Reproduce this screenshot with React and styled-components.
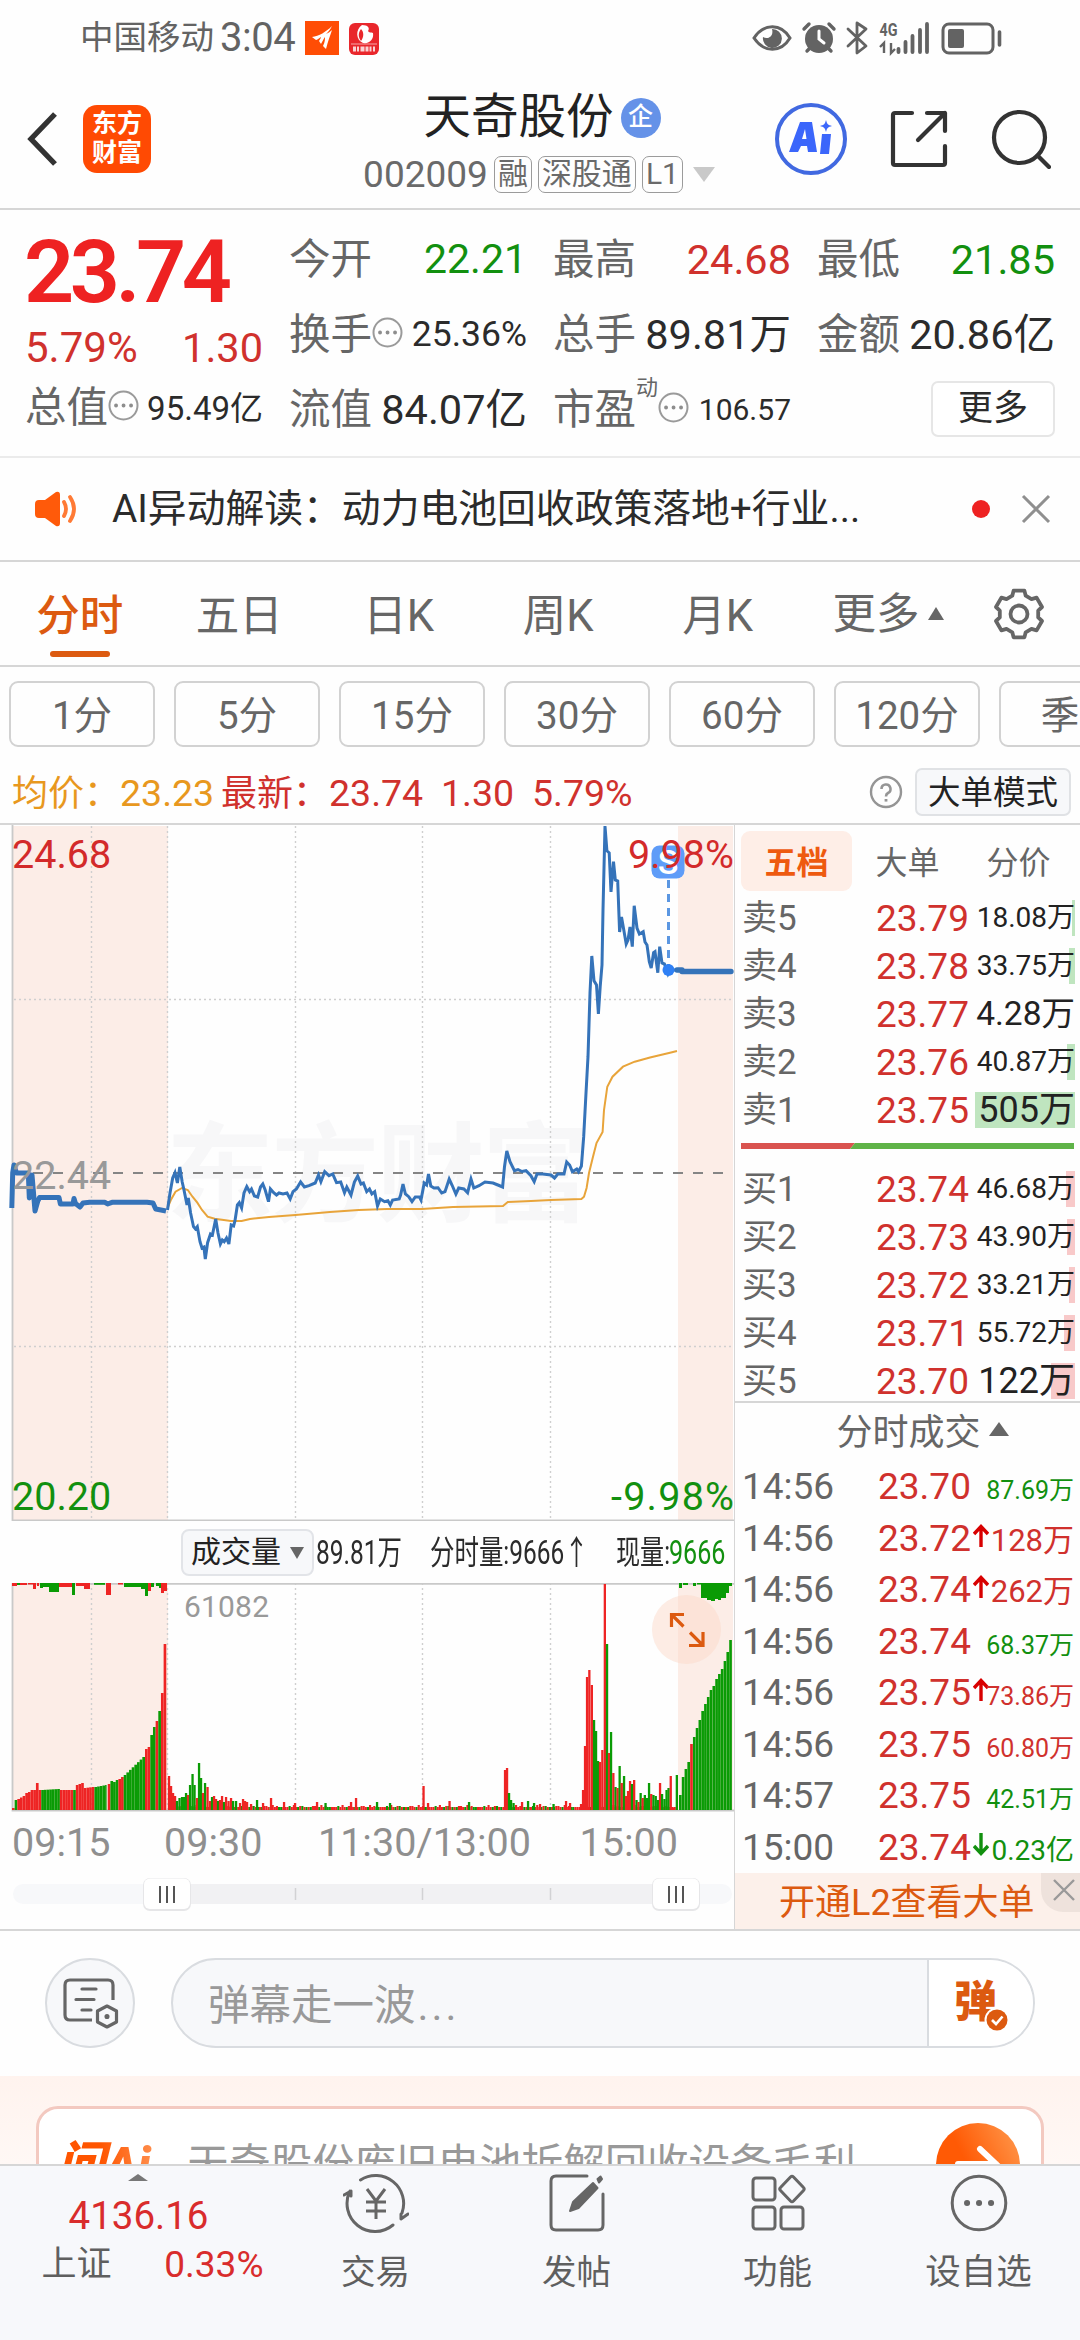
import React from 'react'
import styled, { createGlobalStyle } from 'styled-components'

const RED = '#d0312d'
const GREEN = '#12900f'
const ORANGE = '#dc5a10'
const GREY = '#666666'
const DARK = '#2b2b2b'
const LINE = '#d6d6d6'

const GlobalStyle = createGlobalStyle`
  * {
    box-sizing: border-box;
  }

  body {
    margin: 0;
    background: #fff;
  }

  svg {
    display: block;
    flex: none;
  }
`

const Screen = styled.div`
  width: 1080px;
  height: 2340px;
  overflow: hidden;
  background: #fefefe;
  color: ${DARK};
  font-family: Roboto, 'Noto Sans CJK SC', sans-serif;
  line-height: 1;
  white-space: nowrap;
  display: flex;
  flex-direction: column;
`

const Txt = styled.span`
  font-size: ${p => p.$size}px;
  line-height: ${p => p.$size}px;
  color: ${p => p.$color || 'inherit'};
  font-weight: ${p => p.$weight || 400};
  letter-spacing: ${p => p.$ls || 0}px;
`

/* ---------- status bar ---------- */

const StatusBar = styled.div`
  height: 70px;
  padding: 5px 78px 0 80px;
  display: flex;
  align-items: center;
  justify-content: space-between;
  color: #636363;
`

const StatusGroup = styled.div`
  display: flex;
  align-items: center;
`

const StatusTime = styled(Txt)`
  margin: 0 9px 0 6px;
`

function StatusLeft() {
  return (
    <StatusGroup>
      <Txt $size={33.5}>中国移动</Txt>
      <StatusTime $size={40} $ls={-0.5}>
        3:04
      </StatusTime>
      <svg width="76" height="36" viewBox="304 18 76 36">
        <rect x="305" y="19" width="34" height="34" fill="#ff4d05" />
        <path
          d="M312 35c7-1 14-5 20-11-2 4-4 6-6 8 2-1 4-2 6-4-2 6-4 11-6 19l-3-3c2-4 2-7 2-9-2 3-3 5-4 7l-2-3c1-2 2-3 2-4-2 1-4 3-5 3z"
          fill="#fff"
        />
        <rect x="349" y="21" width="30" height="32" rx="6" fill="#e9272c" />
        <path
          d="M362 23c-7 5-6 15 1 18 7 1 11-4 10-10-2-1-4 0-5-2 2-3 0-6-6-6zM361 27c3 3 3 8 0 12-3-4-3-8 0-12z"
          fill="#fff"
          fillRule="evenodd"
        />
        <path d="M351 42h26" stroke="#fff" strokeWidth="1" opacity=".6" />
        <path d="M353 47h22" stroke="#fff" strokeWidth="5" strokeDasharray="3 1 2 1.5 4 1" opacity=".8" />
      </svg>
    </StatusGroup>
  )
}

function StatusRight() {
  return (
    <svg width="250" height="36" viewBox="752 18 250 36" fill="none" stroke="#636363">
      <path d="M754 36c10-15 27-15 36 0-9 15-26 15-36 0z" strokeWidth="3" />
      <path d="M772 27a9.500 9.500 0 1 1-9 8c5 3 11-1 9-8z" fill="#636363" stroke="none" />
      <circle cx="819" cy="37" r="14" fill="#636363" stroke="none" />
      <path d="M804 27l5-5M834 27l-5-5M807 49l3-3M831 49l-3-3" strokeWidth="3.4" strokeLinecap="round" />
      <path d="M819 29v8l5 4" stroke="#fff" strokeWidth="3" strokeLinecap="round" />
      <path d="M848 27l18 17-9 7V21l9 6-18 17" strokeWidth="2.8" strokeLinejoin="round" strokeLinecap="round" />
      <text
        x="879.5"
        y="34"
        fill="#636363"
        stroke="none"
        fontSize="18"
        fontWeight="700"
        fontFamily="Roboto"
        textLength="18"
        lengthAdjust="spacingAndGlyphs"
      >
        4G
      </text>
      <path d="M884 51V41l-4 4M891 41v10l4-4" strokeWidth="2.4" />
      <path d="M898.5 47v3M905.5 40v10M912.5 34v16M920 28v22M927 22v28" strokeWidth="3.8" strokeLinecap="round" />
      <rect x="943" y="22" width="50" height="29" rx="6" strokeWidth="3" />
      <rect x="948" y="27" width="16" height="19" rx="2" fill="#636363" stroke="none" />
      <path d="M999.5 30v13" strokeWidth="3.6" strokeLinecap="round" />
    </svg>
  )
}

/* ---------- title bar ---------- */

const Header = styled.header`
  height: 140px;
  padding: 0 29px 0 27px;
  border-bottom: 2px solid ${LINE};
  display: grid;
  grid-template-columns: 1fr auto 1fr;
`

const HeaderSide = styled.div`
  display: flex;
  align-items: center;
  gap: ${p => p.$gap}px;
  justify-content: ${p => p.$align || 'flex-start'};
`

const Logo = styled.div`
  width: 68px;
  height: 68px;
  border-radius: 14px;
  background: #ff4a03;
  color: #fff;
  font-size: 25px;
  font-weight: 700;
  line-height: 29px;
  padding-top: 4px;
  text-align: center;
`

const HeaderCenter = styled.div`
  display: flex;
  flex-direction: column;
  align-items: center;
  padding-top: 23px;
`

const TitleRow = styled.div`
  display: flex;
  align-items: center;
  gap: 7px;
  height: 50px;
  padding-left: 6px;
`

const Badge = styled.span`
  width: 40px;
  height: 40px;
  border-radius: 50%;
  background: #6592e8;
  color: #fff;
  font-size: 25px;
  font-weight: 500;
  line-height: 38px;
  text-align: center;
`

const CodeRow = styled.div`
  display: flex;
  align-items: center;
  gap: 6px;
  height: 38px;
  margin-top: 12px;
  color: #6a6a6a;
`

const Tag = styled.span`
  height: 37px;
  padding: 0 3px;
  border: 1.5px solid #9b9b9b;
  border-radius: 7px;
  font-size: 30px;
  line-height: 34px;
`

const Caret = styled.span`
  width: 0;
  height: 0;
  border-left: ${p => p.$w / 2}px solid transparent;
  border-right: ${p => p.$w / 2}px solid transparent;
  border-top: ${p => (p.$up ? 0 : p.$h)}px solid ${p => p.$color};
  border-bottom: ${p => (p.$up ? p.$h : 0)}px solid ${p => p.$color};
  margin-left: ${p => p.$ml || 0}px;
  margin-top: ${p => p.$mt || 0}px;
`

function TitleBar() {
  return (
    <Header>
      <HeaderSide $gap={25}>
        <svg width="31" height="54" viewBox="0 0 31 54">
          <path d="M28 2L4 27l24 25" fill="none" stroke="#333" strokeWidth="5.4" />
        </svg>
        <Logo>
          东方
          <br />
          财富
        </Logo>
      </HeaderSide>
      <HeaderCenter>
        <TitleRow>
          <Txt $size={47.5} $color="#222">
            天奇股份
          </Txt>
          <Badge>企</Badge>
        </TitleRow>
        <CodeRow>
          <Txt $size={37}>002009</Txt>
          <Tag>融</Tag>
          <Tag>深股通</Tag>
          <Tag>L1</Tag>
          <Caret $w={22} $h={15} $color="#c9c9c9" $ml={4} />
        </CodeRow>
      </HeaderCenter>
      <HeaderSide $gap={43} $align="flex-end">
        <svg width="72" height="72" viewBox="0 0 72 72">
          <circle cx="36" cy="36" r="34" fill="none" stroke="#4169e1" strokeWidth="4" />
          <path
            d="M25 19h12l5 30h-9l-1-6h-6l-3 6h-9zM30 26l-3 10h4.500zM47 31h9l-2 20h-9zM51 17c1 4 2 5 6 6-4 1-5 2-6 6-1-4-2-5-6-6 4-1 5-2 6-6z"
            fill="#3b66fb"
            fillRule="evenodd"
          />
        </svg>
        <svg width="58" height="58" viewBox="0 0 58 58" fill="none" stroke="#333" strokeWidth="4.200" strokeLinecap="round" strokeLinejoin="round">
          <path d="M22 3H5q-2 0-2 2v48q0 2 2 2h48q2 0 2-2V36" />
          <path d="M37 3h18v18M55 3L28 30" />
        </svg>
        <svg width="60" height="60" viewBox="0 0 60 60" fill="none" stroke="#333" strokeWidth="4.200" strokeLinecap="round">
          <circle cx="28.500" cy="28.500" r="25.500" />
          <path d="M46.500 46.500L58 58" />
        </svg>
      </HeaderSide>
    </Header>
  )
}

/* ---------- quote summary ---------- */

const Quote = styled.section`
  height: 248px;
  padding: 0 26px 0 25px;
  border-bottom: 2px solid #ebebeb;
  display: grid;
  grid-template-columns: 238px 1fr;
  column-gap: 26px;
`

const QuoteMain = styled.div`
  display: flex;
  flex-direction: column;
`

const LastPrice = styled(Txt)`
  margin: 18px 0 0 -1px;
`

const Spread = styled.div`
  display: flex;
  align-items: center;
  justify-content: space-between;
  height: ${p => p.$h}px;
  margin-top: ${p => p.$mt || 0}px;
`

const QuoteGrid = styled.div`
  display: grid;
  grid-template-columns: repeat(3, 238px);
  column-gap: 26px;
  grid-template-rows: repeat(3, 75px);
  padding-top: 12px;
`

const Cell = styled.div`
  display: flex;
  align-items: center;
  justify-content: space-between;
`

const LabelBox = styled.span`
  display: flex;
  align-items: center;
  color: ${GREY};
  font-size: 41.500px;
  line-height: 42px;
`

const Sup = styled.sup`
  align-self: flex-start;
  font-size: 22px;
  line-height: 22px;
  margin: -12px 0 0 0;
`

const DotsIcon = styled.svg`
  margin-bottom: 5px;
`

const MoreButton = styled.button`
  width: 124px;
  height: 56px;
  margin: -2px 0 0 auto;
  padding: 0;
  border: 2px solid #e6e6e6;
  border-radius: 7px;
  background: #fff;
  color: ${DARK};
  font: 35px/48px Roboto, 'Noto Sans CJK SC', sans-serif;
`

const Dots = () => (
  <DotsIcon width="31" height="31" viewBox="0 0 31 31">
    <circle cx="15.500" cy="15.500" r="14" fill="none" stroke="#9a9a9a" strokeWidth="2" />
    <path d="M8 15.500h.1M15.500 15.500h.1M23 15.500h.1" stroke="#8d8d8d" strokeWidth="3.800" strokeLinecap="round" />
  </DotsIcon>
)

const quoteCells = [
  { label: '今开', value: '22.21', color: GREEN, size: 41 },
  { label: '最高', value: '24.68', color: RED, size: 41.5 },
  { label: '最低', value: '21.85', color: GREEN, size: 41.5 },
  { label: '换手', value: '25.36%', size: 35.5, dots: true },
  { label: '总手', value: '89.81万', size: 41.5 },
  { label: '金额', value: '20.86亿', size: 41.5 },
  { label: '流值', value: '84.07亿', size: 41.5 },
  { label: '市盈', value: '106.57', size: 30, dots: true, sup: '动' }
]

function QuotePanel() {
  return (
    <Quote>
      <QuoteMain>
        <LastPrice $size={88} $weight={600} $color="#ee2222" $ls={-4.5}>
          23.74
        </LastPrice>
        <Spread $h={50} $mt={7}>
          <Txt $size={42} $color={RED}>
            5.79%
          </Txt>
          <Txt $size={41.5} $color={RED}>
            1.30
          </Txt>
        </Spread>
        <Spread $h={50} $mt={10}>
          <LabelBox>
            总值
            <Dots />
          </LabelBox>
          <Txt $size={33}>95.49亿</Txt>
        </Spread>
      </QuoteMain>
      <QuoteGrid>
        {quoteCells.map(c => (
          <Cell key={c.label}>
            <LabelBox>
              {c.label}
              {c.sup && <Sup>{c.sup}</Sup>}
              {c.dots && <Dots />}
            </LabelBox>
            <Txt $size={c.size} $color={c.color}>
              {c.value}
            </Txt>
          </Cell>
        ))}
        <Cell>
          <MoreButton>更多</MoreButton>
        </Cell>
      </QuoteGrid>
    </Quote>
  )
}

/* ---------- notice ---------- */

const Notice = styled.div`
  height: 104px;
  border-bottom: 2px solid ${LINE};
  padding: 0 29px 0 33px;
  display: flex;
  align-items: center;
`

const NoticeText = styled(Txt)`
  flex: 1;
  margin-left: 33px;
`

const RedDot = styled.span`
  width: 18px;
  height: 18px;
  border-radius: 50%;
  background: #ee2222;
  margin-right: 31px;
`

function NoticeBar() {
  return (
    <Notice>
      <svg width="46" height="38" viewBox="0 0 46 38">
        <path d="M2 14q0-4 4-4h6L23 2q4-1 4 3v28q0 4-4 3L12 28H6q-4 0-4-4z" fill="#ff5a0a" />
        <path d="M31 12q4 7 0 14M37 7q8 12 0 24" fill="none" stroke="#ff7a35" strokeWidth="3.800" strokeLinecap="round" />
      </svg>
      <NoticeText $size={38.8}>AI异动解读：动力电池回收政策落地+行业...</NoticeText>
      <RedDot />
      <svg width="30" height="30" viewBox="0 0 30 30">
        <path d="M2 2l26 26M28 2L2 28" stroke="#8f8f8f" strokeWidth="3" />
      </svg>
    </Notice>
  )
}

/* ---------- period tabs ---------- */

const Tabs = styled.nav`
  height: 105px;
  border-bottom: 2px solid ${LINE};
  display: flex;
  align-items: center;
  padding: 0 35px 0 0;
`

const Tab = styled.div`
  width: 159.500px;
  height: 103px;
  padding-top: 32px;
  display: flex;
  flex-direction: column;
  align-items: center;
  color: ${p => (p.$active ? ORANGE : GREY)};
  font-size: 43.500px;
  line-height: 46px;
  font-weight: ${p => (p.$active ? 500 : 400)};

  &::after {
    content: '';
    width: 60px;
    height: 6px;
    margin-top: 11px;
    border-radius: 3px;
    background: ${p => (p.$active ? ORANGE : 'transparent')};
  }
`

const MoreTab = styled.div`
  display: flex;
  align-items: center;
  flex: 1;
  padding: 3px 0 0 35px;
  color: ${GREY};
  font-size: 43.500px;
  line-height: 46px;
`

const Chips = styled.div`
  height: 99px;
  padding: 0 9px 5px;
  display: flex;
  align-items: center;
  gap: 19px;
  overflow: hidden;
`

const Chip = styled.div`
  flex: 0 0 146px;
  height: 66px;
  border: 2px solid #d2d2d2;
  border-radius: 9px;
  text-align: center;
  color: ${GREY};
  font-size: 38.500px;
  line-height: 66px;
`

// six-tooth cog outline
const cogPath = (() => {
  const pts = []
  for (let i = 0; i < 6; i++) {
    const a = i * 60 - 90
    ;[
      [-20, 19.5],
      [-13, 24],
      [13, 24],
      [20, 19.5]
    ].forEach(([d, r]) => {
      const t = ((a + d) * Math.PI) / 180
      pts.push(`${(26 + r * Math.cos(t)).toFixed(1)} ${(26 + r * Math.sin(t)).toFixed(1)}`)
    })
  }
  return `M${pts.join('L')}Z`
})()

function PeriodTabs() {
  return (
    <>
      <Tabs>
        {['分时', '五日', '日K', '周K', '月K'].map((t, i) => (
          <Tab key={t} $active={i === 0}>
            {t}
          </Tab>
        ))}
        <MoreTab>
          更多
          <Caret $w={16} $h={13} $color={GREY} $up $ml={8} $mt={-3} />
        </MoreTab>
        <svg width="52" height="52" viewBox="0 0 52 52" fill="none" stroke={GREY} strokeWidth="3.800" strokeLinejoin="round">
          <path d={cogPath} />
          <circle cx="26" cy="26" r="8.500" />
        </svg>
      </Tabs>
      <Chips>
        {['1分', '5分', '15分', '30分', '60分', '120分', '季K'].map(t => (
          <Chip key={t}>{t}</Chip>
        ))}
      </Chips>
    </>
  )
}

/* ---------- average line ---------- */

const AvgRow = styled.div`
  height: 59px;
  border-bottom: 2px solid ${LINE};
  padding: 0 9px 5px 12px;
  display: flex;
  align-items: center;
  color: ${RED};
`

const AvgText = styled(Txt)`
  width: ${p => p.$w}px;
  padding-top: 4px;
`

const ModeButton = styled.div`
  width: 156px;
  height: 48px;
  margin-left: 12px;
  border: 2px solid #e0e2e5;
  border-radius: 7px;
  background: #f7f8fa;
  color: #222;
  font-size: 32.500px;
  line-height: 47px;
  text-align: center;
`

const Spacer = styled.span`
  flex: 1;
`

function AverageRow() {
  return (
    <AvgRow>
      <AvgText $w={108} $size={36} $color="#e8981e">
        均价：
      </AvgText>
      <AvgText $w={101} $size={37.5} $color="#e8981e">
        23.23
      </AvgText>
      <AvgText $w={108} $size={36}>
        最新：
      </AvgText>
      <AvgText $w={112} $size={37.5}>
        23.74
      </AvgText>
      <AvgText $w={91} $size={37.5}>
        1.30
      </AvgText>
      <AvgText $w={100} $size={37.5}>
        5.79%
      </AvgText>
      <Spacer />
      <svg width="34" height="34" viewBox="0 0 34 34" fill="none" stroke="#959595">
        <circle cx="17" cy="17" r="15" strokeWidth="2.400" />
        <path d="M12.500 14a4.500 4.500 0 1 1 6.500 4q-2 1-2 3.500" strokeWidth="2.600" />
        <path d="M17 24v2.600" strokeWidth="2.800" />
      </svg>
      <ModeButton>大单模式</ModeButton>
    </AvgRow>
  )
}

/* ---------- intraday chart ---------- */

const preOpen =
  '11.8,1208 12.7,1173 14,1165 16.5,1173 28.3,1173 29.3,1198 32,1175 35,1211 37.8,1201 39.6,1197.5 59,1197.5 60.4,1204 73,1204 74,1198.5 75.5,1203.5 80,1207 83,1203 89.7,1202.3 105,1202.3 107.6,1204 112,1202.3 147,1202.3 153,1203 155.7,1209 161,1210 166,1211'

const price =
  '167.5,1210 170,1193 172.7,1178 175,1172.7 177.4,1183 179.8,1167 182.2,1182 184,1190 187,1205 188.3,1198 190.6,1213 193.5,1226.7 195.4,1229 197.3,1226.7 200,1241.7 202,1248 203.9,1247 205.3,1259 207.6,1242.7 210.5,1234 212.4,1235 215.7,1219 218,1233 220.4,1244 222.3,1240 224.2,1241.7 226.5,1238 228.9,1244 231.2,1225 233.6,1226 235,1220.7 237.4,1205 239.3,1202.7 241.6,1208 244,1193 246.8,1186.7 249.6,1191.7 251.5,1189 254.4,1196 257.7,1197 260.5,1187 262.8,1184 265.2,1190 268.5,1201.7 270.4,1189 273.7,1192.7 276.5,1195 279,1193 283,1194 287,1193 290.2,1199 293,1191.7 296.4,1189 300.6,1182 304.4,1187 309,1185.7 315.2,1183 318.5,1175 320.9,1181.7 324.7,1171.7 329,1175.7 332.7,1174 336.5,1182.7 340.7,1182 344.5,1192.7 346.8,1187 351,1195 354.4,1182 357.7,1176 361,1184 363.4,1183 366.7,1191.7 369.5,1189 371.9,1194 374.7,1191.7 377.5,1206 380.3,1199 384.6,1201.7 387.9,1200.7 390.3,1205 392.6,1200 399.2,1199 400.6,1195 403,1184 405.4,1194 408.7,1196.7 412,1201.7 415.3,1197 419.5,1197 421,1200 424.2,1183 426.6,1185 428.5,1174 430.8,1186 434,1188 438,1187.7 441.7,1193 445,1191.7 449.2,1179 452,1185 455.9,1194 458.7,1188 463.9,1189 467.6,1192.7 471,1179 473.8,1188 479,1185.7 485,1182 493,1183 497.9,1185 502.6,1187 504.5,1166.7 506.8,1151 510,1161.7 514.4,1170.7 518,1169.5 522,1171.500 526,1170.7 530.9,1175.7 534.2,1181.7 537,1174 542.7,1174 551,1175 554.5,1178 557.8,1174 564,1174 566.7,1162 569.6,1165 572.4,1171.7 576.7,1169 578.5,1171.7 581.4,1166 583.7,1136.7 586,1093 588,1056.7 590,993 591.8,956 594,980.7 596.5,985 598.4,1014 600.2,986.7 602,965 603,910 605,826 606.9,850.7 609.2,853 611,892 613.5,861.7 615.3,880 617.7,881 619.6,932 621.5,917 623.8,930 626.2,944 628,940 630,927 632.3,946.7 634.2,905.7 637,928 639.4,934 643.2,931.7 645,942 647,945 649.3,961.7 651.2,968 653.6,952.7 655,951.7 657.8,972.7 659.7,946.7 662,963 664.4,964 668,974 670,970 679.5,970'

const average =
  '167.5,1208 170.8,1200 175.5,1191.7 182,1188 187.8,1190 192.5,1196.7 197.3,1202.7 202,1210 207.6,1216.7 214.7,1218.7 231,1221 241.6,1221 250,1219 269,1217 295.4,1215 330,1212 358.6,1210 387,1209 422,1209 453,1207 503,1206 507.8,1202 531,1201 551,1200 581.4,1199 584,1196.7 586.6,1188 589,1173 593,1156.7 596.5,1143 602.6,1132 604,1110 607.3,1086.7 612.5,1076.7 623,1066.7 634.7,1061.7 650,1057.5 670,1052.7 677,1051'

const gridX = [91.5, 167.5, 295.5, 422.5, 550.5]

const ChartColumn = styled.div`
  width: 734px;
  display: flex;
  flex-direction: column;
`

const Plot = styled.svg`
  font-family: Roboto, 'Noto Sans CJK SC', sans-serif;
`

function PriceChart() {
  return (
    <Plot width="734" height="696" viewBox="0 825 734 696">
      <rect x="13" y="826" width="155" height="694" fill="#fcede7" />
      <rect x="678" y="826" width="55" height="694" fill="#fcede7" />
      <text x="166" y="1213" fontSize="108" fontWeight="700" fill="#f7f7f8" textLength="424">
        东方财富
      </text>
      <g stroke="#cfcfcf" strokeWidth="1.400" strokeDasharray="2 3">
        {gridX.map(x => (
          <path key={x} d={`M${x} 826V1520`} />
        ))}
        <path d="M14 999.500H733M14 1346.500H733" />
      </g>
      <path d="M12.500 825V1520.500H734" fill="none" stroke="#c9c9c9" strokeWidth="1.800" />
      <path d="M33 1173H733" stroke="#858585" strokeWidth="2" strokeDasharray="10 10" />
      <polyline points={average} fill="none" stroke="#e8a43a" strokeWidth="2" />
      <polyline points={preOpen} fill="none" stroke="#3573b9" strokeWidth="5" strokeLinejoin="round" />
      <polyline points={price} fill="none" stroke="#3573b9" strokeWidth="3" />
      <path d="M677 970H682M682 971.500H731" stroke="#3573b9" strokeWidth="5.400" strokeLinecap="round" />
      <rect x="651.500" y="845.500" width="33" height="33" rx="8" fill="#5e9cf8" />
      <text x="668" y="874" fontSize="34" fontWeight="500" fill="#fff" textAnchor="middle">
        S
      </text>
      <path d="M668.500 880V966" stroke="#5b97e2" strokeWidth="3" strokeDasharray="8 6" />
      <circle cx="668.500" cy="970" r="6" fill="#2f80f5" />
      <text x="12" y="868" fontSize="39.500" fill="#d32a2a">
        24.68
      </text>
      <text x="734" y="868" fontSize="39.500" fill="#d32a2a" textAnchor="end" textLength="106">
        9.98%
      </text>
      <text x="12" y="1189" fontSize="39.500" fill="#999">
        22.44
      </text>
      <text x="12" y="1510" fontSize="39.500" fill={GREEN}>
        20.20
      </text>
      <text x="734" y="1510" fontSize="39.500" fill={GREEN} textAnchor="end" textLength="123">
        -9.98%
      </text>
    </Plot>
  )
}

const VolumeHead = styled.div`
  height: 62px;
  padding-left: 181px;
  display: flex;
  align-items: center;
`

const Picker = styled.div`
  width: 133px;
  height: 47px;
  border: 2px solid #e2e4e8;
  border-radius: 8px;
  background: #f7f8fa;
  display: flex;
  align-items: center;
  padding: 0 0 1px 8px;
  color: #222;
  font-size: 30px;
`

const Condensed = styled.span`
  width: ${p => p.$w}px;
  margin-left: ${p => p.$ml}px;
  font-size: 33.500px;
  line-height: 38px;
  padding-top: 2px;
  color: ${p => p.$color || DARK};

  & > span {
    display: inline-block;
    transform: scaleX(${p => p.$scale});
    transform-origin: left center;
  }
`

// runs of bars: [count, first height, last height, colour]
const preRuns = [
  [1, 2, 2, 'r'], [1, 10, 10, 'g'], [3, 11, 14, 'r'], [2, 17, 18, 'r'], [2, 20, 20, 'r'],
  [1, 27, 27, 'r'], [1, 20, 20, 'r'], [7, 20, 21, 'g'], [5, 20, 20, 'r'], [1, 20, 20, 'g'],
  [3, 25, 27, 'r'], [4, 22, 23, 'r'], [5, 23, 25, 'g'], [1, 26, 26, 'r'], [1, 29, 29, 'g'],
  [1, 28, 28, 'g'], [1, 30, 30, 'g'], [2, 31, 33, 'r'], [8, 35, 53, 'g'], [2, 61, 63, 'r'],
  [1, 75, 75, 'g'], [1, 83, 83, 'g'], [1, 89, 89, 'r'], [1, 99, 99, 'g'], [1, 117, 117, 'r'],
  [1, 166, 166, 'r']
]

const spikes = [
  [169, 34, 'r'], [171, 24, 'r'], [173, 17, 'r'], [175, 14, 'r'], [177, 9, 'g'], [179.500, 12, 'g'],
  [182, 13, 'g'], [184, 13, 'g'], [186, 17, 'g'], [188, 15, 'r'], [190, 25, 'g'], [192.5, 36, 'g'],
  [194.500, 25, 'g'], [197, 12, 'r'], [199, 47, 'g'], [201, 32, 'g'], [203, 17, 'r'], [205, 27, 'g'],
  [207.5, 23, 'r'], [210, 9, 'r'], [212, 13, 'g'], [214, 14, 'r'], [216, 11, 'r'], [218, 9, 'g'],
  [220, 10, 'r'], [222, 14, 'r'], [224, 8, 'g'], [226, 13, 'r'], [228.5, 9, 'r'], [231, 12, 'r'],
  [233, 9, 'g'], [236, 9, 'g'], [240, 7, 'r'], [243, 11, 'r'], [245, 9, 'r'], [247, 8, 'r'],
  [251, 6, 'r'], [257, 10, 'g'], [263, 7, 'r'], [271, 12, 'r'], [284, 8, 'r'], [295, 7, 'r'],
  [317, 8, 'r'], [325.500, 7, 'g'], [351, 8, 'r'], [356, 12, 'r'], [377, 8, 'g'], [390, 7, 'g'],
  [423.5, 24, 'r'], [428, 7, 'r'], [449.5, 9, 'r'], [469, 8, 'g'], [505, 40, 'r'], [507, 42, 'r'],
  [509, 17, 'g'], [511, 10, 'g'], [513.500, 7, 'g'], [522, 8, 'r'], [528, 9, 'g'], [534, 7, 'g'],
  [540, 6, 'r'], [553.500, 6, 'g'], [566, 9, 'r'], [570, 7, 'r'], [581, 6, 'r'], [583, 20, 'r'],
  [585, 64, 'r'], [587, 133, 'r'], [589.3, 140, 'r'], [591.8, 125, 'r'], [594, 90, 'g'], [596, 79, 'g'],
  [598, 49, 'g'], [600, 48, 'r'], [602.3, 60, 'r'], [604.8, 226, 'r'], [607, 166, 'g'], [609, 57, 'r'],
  [611, 78, 'g'], [613.300, 37, 'r'], [615.5, 23, 'g'], [617.600, 22, 'r'], [619.6, 44, 'g'], [621.7, 27, 'r'],
  [624, 34, 'g'], [626, 14, 'r'], [628, 19, 'r'], [630, 29, 'r'], [632, 26, 'g'], [634.1, 30, 'r'],
  [636.5, 10, 'g'], [638.500, 8, 'r'], [640.6, 17, 'g'], [642.7, 12, 'r'], [644.8, 15, 'g'], [647, 12, 'g'],
  [649, 27, 'g'], [651.2, 16, 'r'], [653.4, 15, 'g'], [655.700, 14, 'g'], [657.800, 10, 'g'], [660, 27, 'r'],
  [662, 16, 'g'], [664.4, 11, 'g'], [666.500, 20, 'g'], [668.5, 22, 'g'], [670.700, 34, 'r'], [673, 2, 'r'],
  [676.800, 35, 'g']
]

const closeBars = [15, 33, 41, 48, 66, 73, 82, 90, 99, 106, 113, 120, 124, 131, 136, 141, 149, 158, 170]

// imbalance bars that hang from the top edge: [from, to, depth, colour]
const hanging = [
  [12, 17, 3, 'r'], [17, 20, 2, 'g'], [20, 27, 2, 'r'], [28, 33, 1.500, 'r'], [33, 36, 6, 'r'], [37, 39, 3, 'r'],
  [40, 43, 5, 'g'], [43, 49, 4, 'g'], [49, 59, 9, 'g'], [59, 72, 4, 'r'], [72, 75, 12, 'g'], [76, 84, 3, 'r'],
  [84, 90, 6, 'r'], [94, 105, 1.800, 'g'], [106, 111, 12, 'r'], [118, 123, 1.500, 'r'], [124, 130, 4, 'g'],
  [130, 141, 4, 'g'], [141, 145, 6, 'g'], [145, 148, 13, 'g'], [148, 151, 8, 'r'], [151, 154, 4, 'g'],
  [156, 159, 3, 'g'], [159, 161, 5, 'g'], [161, 164, 10, 'r'], [164, 167, 8, 'r'],
  [679, 682, 5, 'g'], [683, 688, 2, 'g'], [693, 696, 3, 'g'], [697, 701, 1.500, 'g'], [701, 707, 15, 'g'],
  [707, 711, 17, 'g'], [711, 715, 18, 'g'], [715, 718, 16, 'g'], [718, 721, 17, 'g'], [721, 726, 15, 'g'],
  [726, 729, 10, 'g'], [729, 732, 3, 'g']
]

const paint = c => (c === 'r' ? '#ee2424' : '#0a9b05')

const BASE = 1810

const preBars = []
preRuns.forEach(([n, from, to, c]) => {
  for (let i = 0; i < n; i++) {
    preBars.push([n > 1 ? from + ((to - from) * i) / (n - 1) : from, c])
  }
})

// quiet minutes between the spikes
const quiet = []
for (let i = 0; i < 240; i++) {
  const k = (i * 7919) % 23
  quiet.push([168 + i * 2.116, k > 20 ? 5 : 3 + (k % 4 === 0 ? 1 : 0), k % 5 < 3 ? 'r' : 'g'])
}

function VolumeChart() {
  return (
    <Plot width="734" height="229" viewBox="0 1583 734 229">
      <rect x="13" y="1583" width="155" height="228" fill="#fcede7" />
      <rect x="678" y="1583" width="55" height="228" fill="#fcede7" />
      <g stroke="#cfcfcf" strokeWidth="1.400" strokeDasharray="2 3">
        {gridX.map(x => (
          <path key={x} d={`M${x} 1583V1810`} />
        ))}
      </g>
      <path d="M734 1583.800H12.500V1810.500H734" fill="none" stroke="#c9c9c9" strokeWidth="1.800" />
      {hanging.map(([x1, x2, h, c]) => (
        <rect key={x1} x={x1} y="1583" width={x2 - x1} height={h} fill={paint(c)} />
      ))}
      {preBars.map(([h, c], i) => (
        <rect key={i} x={12 + i * 2.66} y={BASE - h} width={i === 35 ? 1.5 : 2.66} height={h} fill={paint(c)} />
      ))}
      {quiet.map(([x, h, c]) => (
        <rect key={x} x={x} y={BASE - h} width="2.100" height={h} fill={paint(c)} />
      ))}
      {spikes.map(([x, h, c]) => (
        <rect key={x} x={x - 1.1} y={BASE - h} width="2.300" height={h} fill={paint(c)} />
      ))}
      {closeBars.map((h, i) => (
        <rect key={i} x={679 + i * 2.79} y={BASE - h} width="2.650" height={h} fill={paint(i === 4 ? 'r' : 'g')} />
      ))}
      <text x="184" y="1616.500" fontSize="30" fill="#999" textLength="85">
        61082
      </text>
      <circle cx="686.500" cy="1629.500" r="34.500" fill="#fbd9ca" fillOpacity=".5" />
      <path
        d="M671.500 1627V1614.500H684M672 1615l11.500 11.500M703 1632v13.500H689M702 1644.500l-12-12"
        fill="none"
        stroke={ORANGE}
        strokeWidth="3.200"
      />
    </Plot>
  )
}

const Axis = styled.div`
  height: 60px;
  padding: 2px 56px 0 12px;
  display: flex;
  align-items: center;
  justify-content: space-between;
  color: #8f8f8f;
`

const AxisTime = styled(Txt)`
  margin: 0 ${p => -(p.$nudge || 0)}px 0 ${p => p.$nudge || 0}px;
`

const Slider = styled.div`
  height: 56px;
`

function RangeSlider() {
  return (
    <Slider>
      <svg width="734" height="56" viewBox="0 1872 734 56">
        <rect x="13" y="1884" width="719" height="20" rx="10" fill="#f7f8fa" />
        <rect x="167" y="1884" width="510" height="20" fill="#f1f1f3" />
        <path d="M295.500 1888v12M422.500 1888v12M550.500 1888v12" stroke="#d2d2d4" strokeWidth="1.500" />
        {[144, 653].map(x => (
          <g key={x}>
            <rect x={x - 1} y="1878" width="48" height="33" rx="7" fill="#e6e6e8" />
            <rect x={x} y="1878.500" width="46" height="30.500" rx="6" fill="#fff" />
            <path d={`M${x + 16} 1886v17M${x + 23} 1886v17M${x + 30} 1886v17`} stroke="#555" strokeWidth="2" />
          </g>
        ))}
      </svg>
    </Slider>
  )
}

/* ---------- order book ---------- */

const Main = styled.section`
  height: 1106px;
  border-bottom: 2px solid ${LINE};
  display: flex;
`

const Book = styled.aside`
  flex: 1;
  border-left: 1.5px solid ${LINE};
  display: flex;
  flex-direction: column;
`

const BookTabs = styled.div`
  height: 69px;
  padding: 6px 0 0 6px;
  display: flex;
`

const BookTab = styled.div`
  width: 111px;
  height: 60px;
  border-radius: 9px;
  text-align: center;
  font-size: 32px;
  line-height: 64px;
  color: ${p => (p.$active ? '#ee5a10' : GREY)};
  font-weight: ${p => (p.$active ? 700 : 400)};
  background: ${p => (p.$active ? '#feeee7' : 'transparent')};
`

const BookRow = styled.div`
  height: 48px;
  padding: 0 5px 0 7px;
  display: grid;
  grid-template-columns: 134px 98px 1fr;
  align-items: center;
`

const Depth = styled.span`
  height: 36px;
  display: flex;
  align-items: center;
  justify-content: flex-end;
  font-size: ${p => p.$size}px;
  color: #222;
  background: linear-gradient(${p => p.$tint}, ${p => p.$tint}) right / ${p => p.$bar}px 100% no-repeat;
`

const Ratio = styled.div`
  height: 31px;
  padding: 9px 5px 0 6px;
`

const sells = [
  ['卖5', '23.79', '18.08万', 28, 3],
  ['卖4', '23.78', '33.75万', 28, 6],
  ['卖3', '23.77', '4.28万', 33.5, 0],
  ['卖2', '23.76', '40.87万', 28, 8],
  ['卖1', '23.75', '505万', 36, 100]
]

const buys = [
  ['买1', '23.74', '46.68万', 28, 9],
  ['买2', '23.73', '43.90万', 28, 8],
  ['买3', '23.72', '33.21万', 28, 6],
  ['买4', '23.71', '55.72万', 28, 11],
  ['买5', '23.70', '122万', 36, 24]
]

const trades = [
  ['14:56', '23.70', '87.69万', 25, 'g'],
  ['14:56', '23.72', '128万', 31, 'r', 'up'],
  ['14:56', '23.74', '262万', 31, 'r', 'up'],
  ['14:56', '23.74', '68.37万', 25, 'g'],
  ['14:56', '23.75', '73.86万', 25, 'r', 'up'],
  ['14:56', '23.75', '60.80万', 25, 'r'],
  ['14:57', '23.75', '42.51万', 25, 'g'],
  ['15:00', '23.74', '0.23亿', 28, 'g', 'down']
]

function Levels({ rows, tint }) {
  return rows.map(([label, p, vol, size, bar]) => (
    <BookRow key={label}>
      <Txt $size={35} $color={GREY}>
        {label}
      </Txt>
      <Txt $size={37} $color={RED}>
        {p}
      </Txt>
      <Depth $size={size} $bar={bar} $tint={tint}>
        {vol}
      </Depth>
    </BookRow>
  ))
}

const TradesHead = styled.div`
  height: 60px;
  border-top: 2px solid ${LINE};
  margin-top: -4px;
  padding: 2px 0 0 30px;
  display: flex;
  align-items: center;
  justify-content: center;
  color: ${GREY};
`

const TradeRow = styled.div`
  height: 51.500px;
  padding: 0 6px 0 7px;
  display: grid;
  grid-template-columns: 136px 95px 15px 1fr;
  align-items: baseline;
  align-content: center;
`

const TradeVol = styled.span`
  font-size: ${p => p.$size}px;
  line-height: 1;
  text-align: right;
  margin-left: -10px;
  color: ${p => (p.$side === 'r' ? RED : GREEN)};
`

const ArrowIcon = styled.svg`
  align-self: start;
  margin: 4px 0 -4px;
`

const Banner = styled.div`
  flex: 1;
  background: #fcf0ea;
  display: flex;
  justify-content: space-between;
`

const BannerText = styled(Txt)`
  padding: 12px 0 0 44px;
`

const BannerClose = styled.span`
  width: 39px;
  height: 39px;
  background: #eee2dc;
  border-bottom-left-radius: 22px;
  padding: 6px 0 0 12px;
`

function Arrow({ dir }) {
  if (!dir) return <span />
  return (
    <ArrowIcon width="16" height="23" viewBox="0 0 16 23">
      <path
        d={dir === 'up' ? 'M8 23V3M1 10l7-7.500 7 7.500' : 'M8 0v20M1 13l7 7.500 7-7.500'}
        fill="none"
        stroke={dir === 'up' ? '#d80000' : GREEN}
        strokeWidth="3.400"
      />
    </ArrowIcon>
  )
}

function OrderBook() {
  return (
    <Book>
      <BookTabs>
        <BookTab $active>五档</BookTab>
        <BookTab>大单</BookTab>
        <BookTab>分价</BookTab>
      </BookTabs>
      <Levels rows={sells} tint="#bfe5bf" />
      <Ratio>
        <svg width="333" height="6" viewBox="0 0 333 6">
          <path d="M0 0H114L109 6H0z" fill="#d9534f" />
          <path d="M114 0H333V6H109z" fill="#5fb348" />
        </svg>
      </Ratio>
      <Levels rows={buys} tint="#f8c9c9" />
      <TradesHead>
        <Txt $size={36}>分时成交</Txt>
        <Caret $w={21} $h={14} $color={GREY} $up $ml={8} $mt={-9} />
      </TradesHead>
      {trades.map(([time, p, vol, size, side, dir], i) => (
        <TradeRow key={i}>
          <Txt $size={37} $color={GREY}>
            {time}
          </Txt>
          <Txt $size={37} $color={RED}>
            {p}
          </Txt>
          <Arrow dir={dir} />
          <TradeVol $size={size} $side={side}>
            {vol}
          </TradeVol>
        </TradeRow>
      ))}
      <Banner>
        <BannerText $size={36} $color={ORANGE}>
          开通L2查看大单
        </BannerText>
        <BannerClose>
          <svg width="22" height="22" viewBox="0 0 22 22">
            <path d="M1 1l20 20M21 1L1 21" stroke="#999" strokeWidth="2.400" />
          </svg>
        </BannerClose>
      </Banner>
    </Book>
  )
}

/* ---------- comment bar ---------- */

const CommentBar = styled.div`
  height: 145px;
  padding: 27px 45px 0 45px;
  display: flex;
  gap: 36px;
`

const RoundButton = styled.div`
  width: 90px;
  height: 90px;
  border: 2px solid #d9dce0;
  border-radius: 50%;
  background: #f7f8fa;
  display: flex;
  align-items: center;
  justify-content: center;
`

const Pill = styled.div`
  flex: 1;
  height: 90px;
  border: 2px solid #d9dce0;
  border-radius: 45px;
  overflow: hidden;
  background: #f7f8fa;
  display: flex;
  align-items: center;
`

const Placeholder = styled(Txt)`
  flex: 1;
  padding: 5px 0 0 35px;
`

const Ellipsis = styled.span`
  letter-spacing: 3px;
  margin-left: 2px;
`

const PillEnd = styled.div`
  width: 106px;
  height: 100%;
  border-left: 2px solid #d9dce0;
  background: #fff;
  display: flex;
  align-items: center;
  padding: 3px 0 0 24px;
`

function DanmuBar() {
  return (
    <CommentBar>
      <RoundButton>
        <svg width="58" height="54" viewBox="62 1979 58 54" fill="none" stroke={GREY} strokeWidth="3.200">
          <path d="M114 2003v-15q0-5-5-5H71q-5 0-5 5v30q0 5 5 5h22" />
          <path d="M83 1992h14M77 2002.500h18M83 2013h9" strokeLinecap="round" />
          <path d="M108 2009l9.500 5v11l-9.500 5-9.500-5v-11z" strokeLinejoin="round" />
          <circle cx="108" cy="2019.500" r="1.800" fill={GREY} strokeWidth="1.500" />
        </svg>
      </RoundButton>
      <Pill>
        <Placeholder $size={41.5} $color="#999">
          弹幕走一波<Ellipsis>...</Ellipsis>
        </Placeholder>
        <PillEnd>
          <svg width="58" height="56" viewBox="953 1977 58 56">
            <text x="954" y="2017" fontSize="43" fontWeight="900" fill={ORANGE} fontFamily="Noto Sans CJK SC">
              弹
            </text>
            <circle cx="997" cy="2020" r="12.500" fill="#fff" />
            <circle cx="997" cy="2020" r="10.500" fill={ORANGE} />
            <path d="M992 2020l4 4 6.500-7.500" fill="none" stroke="#fff" strokeWidth="2.600" />
          </svg>
        </PillEnd>
      </Pill>
    </CommentBar>
  )
}

/* ---------- AI card ---------- */

const AskArea = styled.div`
  height: 88px;
  padding: 30px 36px 0;
  overflow: hidden;
  background: linear-gradient(#fff3ee, #fff8f5);
`

const AskCard = styled.div`
  height: 118px;
  border: 3px solid #f3c9c0;
  border-radius: 22px;
  background: #fff;
  padding: 0 21px 0 18px;
  display: flex;
  align-items: center;
`

const AskLogo = styled.span`
  width: 108px;
  font-size: 48px;
  line-height: 52px;
  font-style: italic;
  font-weight: 900;
  letter-spacing: 0.5px;
  background: linear-gradient(90deg, #ff5500 40%, #ff9a5c);
  background-clip: text;
  color: transparent;
`

const AskText = styled(Txt)`
  flex: 1;
  margin-left: 22px;
`

function AskBar() {
  return (
    <AskArea>
      <AskCard>
        <AskLogo>问Ai</AskLogo>
        <AskText $size={41.8} $color="#999">
          天奇股份废旧电池拆解回收设备毛利
        </AskText>
        <svg width="84" height="84" viewBox="0 0 84 84">
          <defs>
            <linearGradient id="go" x1="0" y1=".5" x2="1" y2="0">
              <stop offset=".3" stopColor="#ff5a05" />
              <stop offset="1" stopColor="#ff9c50" />
            </linearGradient>
          </defs>
          <circle cx="42" cy="42" r="42" fill="url(#go)" />
          <path d="M22 41h38M44 26l17 16-17 17" fill="none" stroke="#fff" strokeWidth="6" strokeLinecap="round" />
        </svg>
      </AskCard>
    </AskArea>
  )
}

/* ---------- bottom navigation ---------- */

const BottomNav = styled.nav`
  flex: 1;
  border-top: 2px solid ${LINE};
  background: #f7f8fb;
  display: grid;
  grid-template-columns: 275px repeat(4, 201px);
`

const IndexBox = styled.div`
  display: flex;
  flex-direction: column;
  align-items: center;
  color: #d92c2c;
`

const IndexRow = styled.div`
  width: 222px;
  display: flex;
  align-items: center;
  justify-content: space-between;
  margin: 10px 0 0 30px;
`

const IndexValue = styled(Txt)`
  margin: 16px 0 0 2px;
`

const NavItem = styled.div`
  display: flex;
  flex-direction: column;
  align-items: center;
  gap: 20px;
  padding-top: 5px;
  color: #5f5f5f;
`

const NavIcon = ({ children }) => (
  <svg width="66" height="64" viewBox="0 0 66 64" fill="none" stroke="#666" strokeWidth="3" strokeLinecap="round" strokeLinejoin="round">
    {children}
  </svg>
)

function Navigation() {
  return (
    <BottomNav>
      <IndexBox>
        <Caret $w={21} $h={7} $color="#777" $up $mt={8} />
        <IndexValue $size={38.5}>4136.16</IndexValue>
        <IndexRow>
          <Txt $size={35} $color="#5f5f5f">
            上证
          </Txt>
          <Txt $size={37}>0.33%</Txt>
        </IndexRow>
      </IndexBox>
      <NavItem>
        <NavIcon>
          <path d="M17.500 9A28 28 0 0 1 59 42M50 54A28 28 0 0 1 7 20M1 24l7-4v5M65 43l-7 5v-5" />
          <path d="M24 18l9 12 9-12M33 30v18M23 31h20M23 40h20" strokeLinecap="butt" />
        </NavIcon>
        <Txt $size={34.5}>交易</Txt>
      </NavItem>
      <NavItem>
        <NavIcon>
          <path d="M43 5H12q-5 0-5 5v44q0 5 5 5h42q5 0 5-5V23" />
          <path d="M26 40l3-9 20-19 4.500 5-19 20zM53.500 8l3-2.500 1.500 2.500-3 3.500z" fill="#666" strokeWidth="2" />
        </NavIcon>
        <Txt $size={34.5}>发帖</Txt>
      </NavItem>
      <NavItem>
        <NavIcon>
          <rect x="8" y="7" width="22" height="22" rx="3" />
          <rect x="8" y="36" width="22" height="22" rx="3" />
          <rect x="36" y="36" width="22" height="22" rx="3" />
          <path d="M45.500 6q1.500-1.500 3 0l10 10.500q1.500 1.500 0 3L48.500 30q-1.500 1.500-3 0L35.500 19.500q-1.500-1.500 0-3z" />
        </NavIcon>
        <Txt $size={34.5}>功能</Txt>
      </NavItem>
      <NavItem>
        <NavIcon>
          <circle cx="33" cy="32" r="26.800" />
          <path d="M21 32h.1M33 32h.1M45 32h.1" strokeWidth="6" />
        </NavIcon>
        <Txt $size={35.5}>设自选</Txt>
      </NavItem>
    </BottomNav>
  )
}

export default function App() {
  return (
    <Screen>
      <GlobalStyle />
      <StatusBar>
        <StatusLeft />
        <StatusRight />
      </StatusBar>
      <TitleBar />
      <QuotePanel />
      <NoticeBar />
      <PeriodTabs />
      <AverageRow />
      <Main>
        <ChartColumn>
          <PriceChart />
          <VolumeHead>
            <Picker>
              成交量
              <Caret $w={15} $h={12} $color={GREY} $ml={9} $mt={2} />
            </Picker>
            <Condensed $w={84} $ml={2} $scale={0.73}>
              <span>89.81万</span>
            </Condensed>
            <Condensed $w={156} $ml={30} $scale={0.73}>
              <span>分时量:9666↑</span>
            </Condensed>
            <Condensed $w={54} $ml={30} $scale={0.72}>
              <span>现量:</span>
            </Condensed>
            <Condensed $w={56} $ml={-1} $scale={0.75} $color={GREEN}>
              <span>9666</span>
            </Condensed>
          </VolumeHead>
          <VolumeChart />
          <Axis>
            <AxisTime $size={39.5}>09:15</AxisTime>
            <AxisTime $size={39.5} $nudge={1}>
              09:30
            </AxisTime>
            <AxisTime $size={39.5} $nudge={4}>
              11:30/13:00
            </AxisTime>
            <AxisTime $size={39.5}>15:00</AxisTime>
          </Axis>
          <RangeSlider />
        </ChartColumn>
        <OrderBook />
      </Main>
      <DanmuBar />
      <AskBar />
      <Navigation />
    </Screen>
  )
}
